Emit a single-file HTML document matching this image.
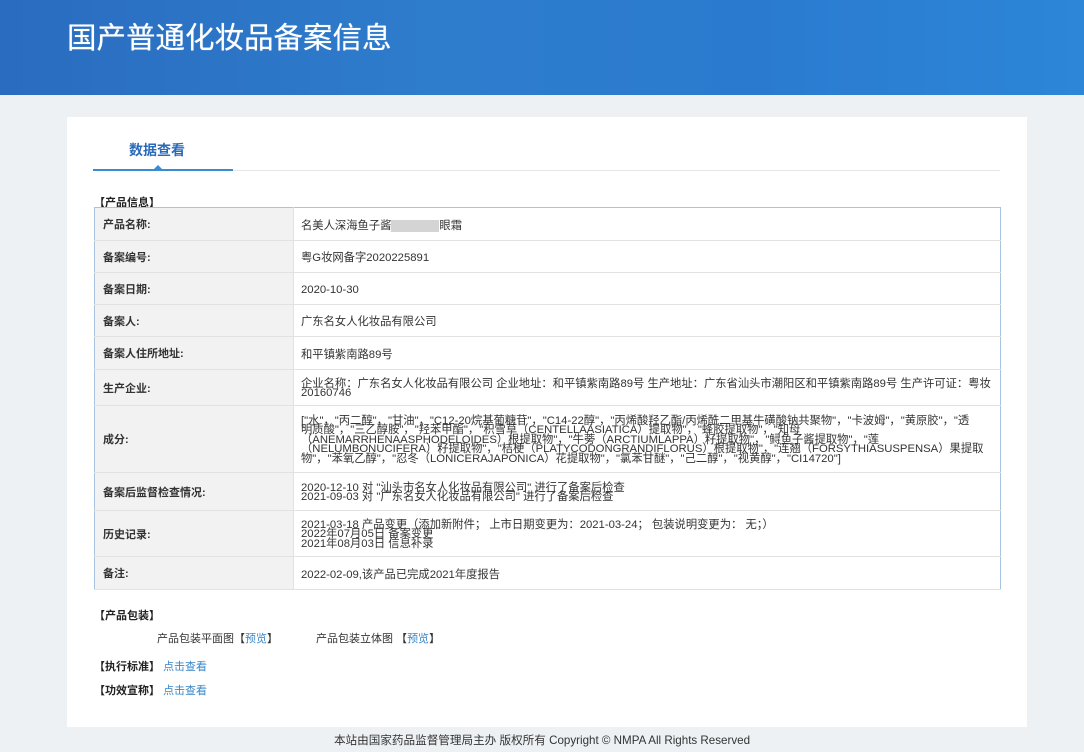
<!DOCTYPE html>
<html><head><meta charset="utf-8"><style>
*{margin:0;padding:0;box-sizing:border-box}
body{width:1084px;height:752px;background:#eef1f4;font-family:"Liberation Sans","Noto Sans CJK SC",sans-serif;font-size:11px;color:#333;position:relative;overflow:hidden}
.hdr{position:absolute;left:0;top:0;width:1084px;height:95px;background:linear-gradient(90deg,#2a6cc0 0%,#2e7ccc 40%,#2a7bd0 70%,#2d86d8 100%)}
.hdr h1{position:absolute;left:67px;top:15px;font-size:29.5px;font-weight:normal;color:#fff;font-family:"Liberation Sans","Noto Sans CJK SC",sans-serif;text-shadow:0 0 0.6px #fff}
.card{position:absolute;left:67px;top:117px;width:960px;height:610px;background:#fff}
.tab{position:absolute;left:129px;top:140px;font-size:14px;font-weight:bold;color:#2a6ab8}
.tabline{position:absolute;left:93px;top:170px;width:907px;height:1px;background:#e6e6e6}
.tabact{position:absolute;left:93px;top:169px;width:140px;height:2px;background:#3a8ad6}
.tri{position:absolute;left:153px;top:165px;width:0;height:0;border-left:5px solid transparent;border-right:5px solid transparent;border-bottom:5px solid #3a8ad6}
.sec{position:absolute;font-weight:bold;font-size:11px;color:#222}
table{position:absolute;left:94px;top:207px;width:907px;border-collapse:collapse;border:1px solid #a8c4e0;table-layout:fixed}
td{border-bottom:1px solid #e2e2e2;font-size:11.3px;vertical-align:middle;overflow:hidden}
td.l{width:199px;background:#f2f2f2;font-weight:bold;padding-left:8px;border-right:1px solid #e2e2e2;color:#333;font-size:11px}
td.v{padding:3px 0 0 7px;white-space:nowrap;line-height:14px}
td.m{line-height:9.5px;padding-top:3px}
.a{color:#3a86c8}
.foot{position:absolute;top:732px;left:0;width:1084px;text-align:center;font-size:11.6px;color:#333}
.blur{display:inline-block;width:48px;height:12px;background:#d4d4d4;vertical-align:middle}
</style></head><body>
<div class="hdr"><h1>国产普通化妆品备案信息</h1></div>
<div class="card"></div>
<div class="tab">数据查看</div>
<div class="tabline"></div><div class="tabact"></div><div class="tri"></div>
<div class="sec" style="left:94px;top:194px">【产品信息】</div>
<table>
<colgroup><col style="width:199px"><col></colgroup>
<tr style="height:33px"><td class="l">产品名称:</td><td class="v">名美人深海鱼子酱<span class="blur"></span>眼霜</td></tr>
<tr style="height:32px"><td class="l">备案编号:</td><td class="v">粤G妆网备字2020225891</td></tr>
<tr style="height:32px"><td class="l">备案日期:</td><td class="v">2020-10-30</td></tr>
<tr style="height:32px"><td class="l">备案人:</td><td class="v">广东名女人化妆品有限公司</td></tr>
<tr style="height:33px"><td class="l">备案人住所地址:</td><td class="v">和平镇紫南路89号</td></tr>
<tr style="height:36px"><td class="l">生产企业:</td><td class="v m">企业名称：广东名女人化妆品有限公司 企业地址：和平镇紫南路89号 生产地址：广东省汕头市潮阳区和平镇紫南路89号 生产许可证：粤妆<br>20160746</td></tr>
<tr style="height:67px"><td class="l">成分:</td><td class="v m">["水"，"丙二醇"，"甘油"，"C12-20烷基葡糖苷"，"C14-22醇"，"丙烯酸羟乙酯/丙烯酰二甲基牛磺酸钠共聚物"，"卡波姆"，"黄原胶"，"透<br>明质酸"，"三乙醇胺"，"羟苯甲酯"，"积雪草（CENTELLAASIATICA）提取物"，"蜂胶提取物"，"知母<br>（ANEMARRHENAASPHODELOIDES）根提取物"，"牛蒡（ARCTIUMLAPPA）籽提取物"，"鲟鱼子酱提取物"，"莲<br>（NELUMBONUCIFERA）籽提取物"，"桔梗（PLATYCODONGRANDIFLORUS）根提取物"，"连翘（FORSYTHIASUSPENSA）果提取<br>物"，"苯氧乙醇"，"忍冬（LONICERAJAPONICA）花提取物"，"氯苯甘醚"，"己二醇"，"视黄醇"，"CI14720"]</td></tr>
<tr style="height:38px"><td class="l">备案后监督检查情况:</td><td class="v m">2020-12-10 对 "汕头市名女人化妆品有限公司" 进行了备案后检查<br>2021-09-03 对 "广东名女人化妆品有限公司" 进行了备案后检查</td></tr>
<tr style="height:46px"><td class="l">历史记录:</td><td class="v m">2021-03-18 产品变更（添加新附件； 上市日期变更为：2021-03-24； 包装说明变更为： 无；）<br>2022年07月05日 备案变更<br>2021年08月03日 信息补录</td></tr>
<tr style="height:33px"><td class="l">备注:</td><td class="v">2022-02-09,该产品已完成2021年度报告</td></tr>
</table>
<div class="sec" style="left:94px;top:607px">【产品包装】</div>
<div style="position:absolute;left:157px;top:630px;font-size:11px">产品包装平面图【<span class="a">预览</span>】</div>
<div style="position:absolute;left:316px;top:630px;font-size:11px">产品包装立体图 【<span class="a">预览</span>】</div>
<div class="sec" style="left:94px;top:658px">【执行标准】 <span class="a" style="font-weight:normal">点击查看</span></div>
<div class="sec" style="left:94px;top:682px">【功效宣称】 <span class="a" style="font-weight:normal">点击查看</span></div>
<div class="foot">本站由国家药品监督管理局主办 版权所有 Copyright © NMPA All Rights Reserved</div>
</body></html>
